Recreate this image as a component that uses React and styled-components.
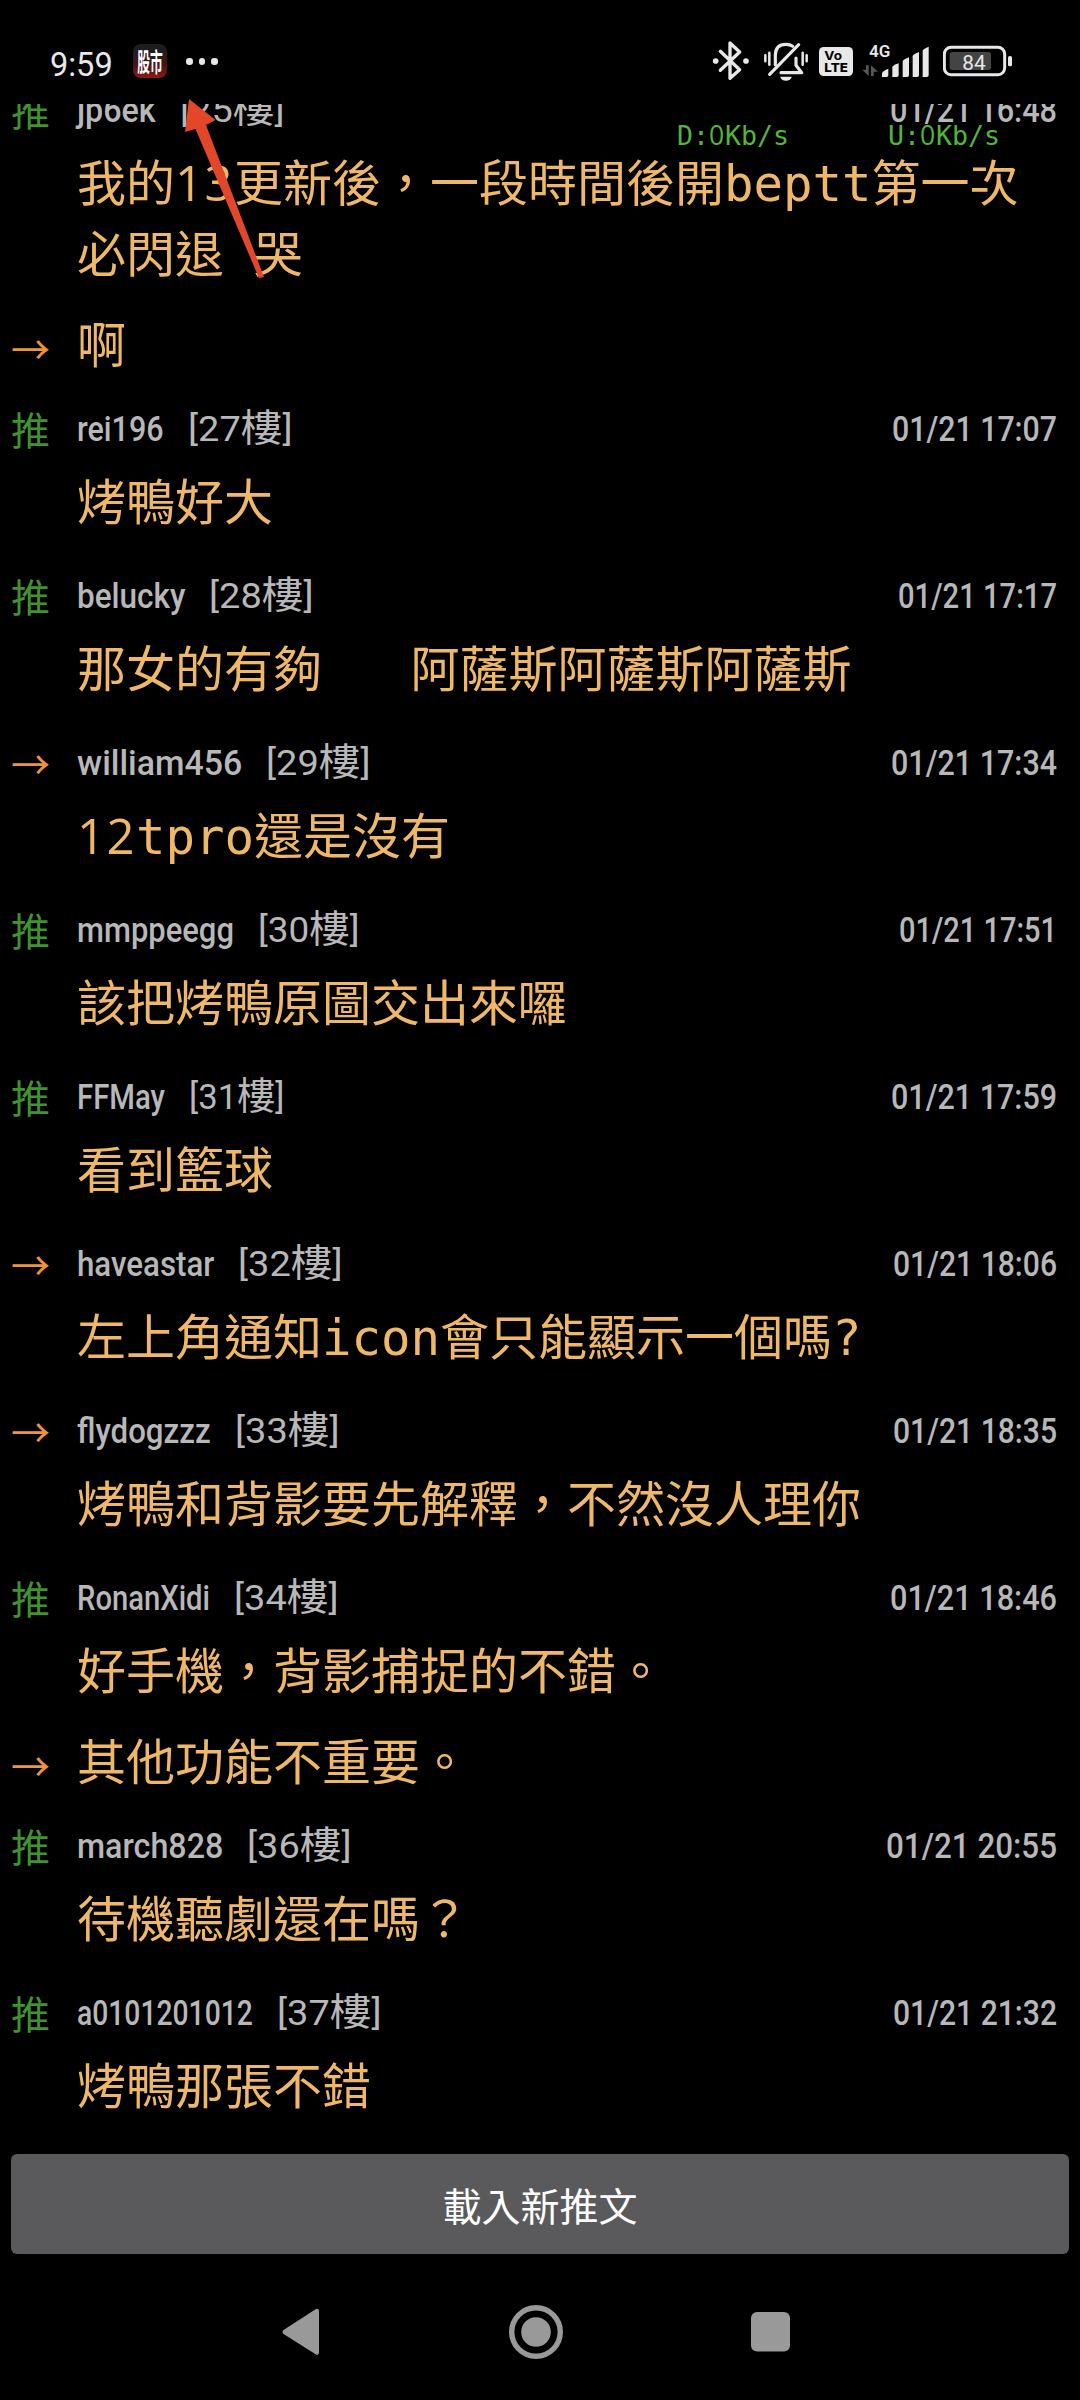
import React, { useLayoutEffect, useRef, useState } from 'react';
import styled, { createGlobalStyle } from 'styled-components';

const GlobalStyle = createGlobalStyle`
  * {
    box-sizing: border-box;
  }

  body {
    margin: 0;
    background: #000;
  }
`;

const cjk = '"Noto Sans CJK TC", sans-serif';

const Screen = styled.div`
  position: relative;
  display: flex;
  flex-direction: column;
  width: 1080px;
  height: 2400px;
  overflow: hidden;
  background: #000;
  font-family: Roboto, ${cjk};
`;

const StatusBar = styled.header`
  display: flex;
  flex: none;
  height: 104px;
  padding: 30px 67px 0 50px;
  color: #e8e8e8;
`;

const Clock = styled.div`
  width: 83px;
  height: 60px;
  font-size: 33px;
  line-height: 69px;
`;

const AppBadge = styled.div`
  display: flex;
  justify-content: center;
  align-items: center;
  width: 34px;
  height: 34px;
  margin-top: 14px;
  border-radius: 8px;
  background: linear-gradient(#1d1d1f 20%, #4a1211 60%, #8c1a16);
`;

const BadgeText = styled.span`
  font: 700 26px/34px ${cjk};
  color: #fff;
  white-space: nowrap;
  transform: scaleX(0.49);
`;

const Dots = styled.div`
  display: flex;
  gap: 6px;
  margin: 28px auto 0 19px;

  i {
    width: 6.5px;
    height: 6.5px;
    border-radius: 50%;
    background: #e8e8e8;
  }
`;

const StatusIcon = styled.svg`
  flex: none;
  height: 60px;
  width: ${({ $width }) => $width}px;
  margin-left: ${({ $gap = 0 }) => $gap}px;
`;

const PostList = styled.main`
  flex: none;
  height: 2050px;
  overflow: hidden;
`;

const PostTrack = styled.div`
  margin-top: -38.5px;
`;

const Post = styled.article`
  display: grid;
  grid-template-columns: 77px 1fr;
`;

const Mark = styled.div`
  height: 81px;
  padding-left: 11px;
  font: 400 39px/86px ${cjk};
  color: ${({ $push }) => ($push ? '#3f9430' : '#ee9440')};
`;

const PostHead = styled.div`
  display: flex;
  height: 83px;
  padding: 7px 23px 0 0;
  font-size: 34.7px;
  font-weight: 500;
  line-height: 74px;
  color: #b8b8b8;
`;

const Floor = styled.div`
  flex: 1;
  margin-left: 24px;
  font-weight: 400;

  span span {
    font: 400 38px/1 ${cjk};
  }
`;

const Message = styled.p`
  margin: 0;
  padding: ${({ $reply }) => ($reply ? '7.5px 0 2.5px' : '0 0 13px')};
  font: 400 49px/71px 'DejaVu Sans Mono', ${cjk};
  color: #efb868;
  white-space: pre-wrap;
`;

// Undotted digits, spaced out to the width of the mono letters around them.
const Digits = styled.span`
  font-family: 'Open Sans';
  line-height: 0;
  letter-spacing: 0.029em;
`;

const LoadButton = styled.button`
  flex: none;
  height: 100px;
  margin: 0 11px;
  padding: 0;
  border: 0;
  border-radius: 6px;
  background: #5a5a5c;
  color: #fff;
  font: 400 39px/100px ${cjk};
`;

const NavBar = styled.nav`
  display: flex;
  align-items: center;
  height: 146px;
  padding: 10px 0 0 282px;
`;

const NavIcon = styled.svg`
  flex: none;
  width: ${({ $width }) => $width}px;
  height: 56px;
  margin-right: ${({ $gap = 0 }) => $gap}px;
  fill: #999;
`;

const Speed = styled.div`
  position: absolute;
  top: 120px;
  left: 677px;
  display: flex;
  gap: 99px;
  font: 400 26.6px/32px 'DejaVu Sans Mono', monospace;
  color: #52b53c;
`;

const Pointer = styled.svg`
  position: absolute;
  top: 90px;
  left: 170px;
  width: 110px;
  height: 200px;
  fill: #e2472a;
`;

const FitBox = styled.div`
  flex: none;
  width: ${({ $width }) => $width}px;
  white-space: nowrap;
`;

const FitText = styled.span`
  display: inline-block;
  transform-origin: 0 50%;
`;

// Condenses a run of text so that it takes exactly the given width.
const Fit = ({ width, children }) => {
  const ref = useRef(null);
  const [scale, setScale] = useState(1);

  useLayoutEffect(() => {
    setScale(width / ref.current.offsetWidth);
  }, [width]);

  return (
    <FitBox $width={width}>
      <FitText ref={ref} style={{ transform: `scaleX(${scale})` }}>
        {children}
      </FitText>
    </FitBox>
  );
};

const MonoText = ({ text }) =>
  text
    .split(/(\d+)/)
    .map((part, i) => (i % 2 ? <Digits key={i}>{part}</Digits> : part));

const posts = [
  { push: true, name: 'jp6ek', width: 79, floor: 25, time: '01/21 16:48', timeWidth: 167, text: '我的13更新後，一段時間後開beptt第一次\n必閃退 哭' },
  { text: '啊' },
  { push: true, name: 'rei196', width: 87, floor: 27, time: '01/21 17:07', timeWidth: 165, text: '烤鴨好大' },
  { push: true, name: 'belucky', width: 108, floor: 28, time: '01/21 17:17', timeWidth: 159, text: '那女的有夠   阿薩斯阿薩斯阿薩斯' },
  { name: 'william456', width: 165, floor: 29, time: '01/21 17:34', timeWidth: 166, text: '12tpro還是沒有' },
  { push: true, name: 'mmppeegg', width: 157, floor: 30, floorWidth: 101, time: '01/21 17:51', timeWidth: 158, text: '該把烤鴨原圖交出來囉' },
  { push: true, name: 'FFMay', width: 88, floor: 31, floorWidth: 95, time: '01/21 17:59', timeWidth: 166, text: '看到籃球' },
  { name: 'haveastar', width: 137, floor: 32, time: '01/21 18:06', timeWidth: 164, text: '左上角通知icon會只能顯示一個嗎?' },
  { name: 'flydogzzz', width: 134, floor: 33, time: '01/21 18:35', timeWidth: 164, text: '烤鴨和背影要先解釋，不然沒人理你' },
  { push: true, name: 'RonanXidi', width: 133, floor: 34, time: '01/21 18:46', timeWidth: 167, text: '好手機，背影捕捉的不錯。' },
  { text: '其他功能不重要。' },
  { push: true, name: 'march828', width: 146, floor: 36, time: '01/21 20:55', timeWidth: 171, text: '待機聽劇還在嗎？' },
  { push: true, name: 'a0101201012', width: 176, floor: 37, time: '01/21 21:32', timeWidth: 164, text: '烤鴨那張不錯' },
];

const StatusIcons = () => (
  <>
    <StatusIcon $width={38} viewBox="36 0 114 180">
      <path d="M61 64 L119 119 L90 145 V39 L119 66 L61 121" fill="none" stroke="#e8e8e8" strokeWidth="10" strokeLinejoin="round" strokeLinecap="round" />
      <circle cx="47" cy="93" r="8.5" fill="#e8e8e8" />
      <circle cx="138" cy="93" r="8.5" fill="#e8e8e8" />
    </StatusIcon>
    <StatusIcon $width={46} $gap={13} viewBox="189 0 138 180">
      <g fill="none" stroke="#e8e8e8" strokeWidth="9.5" strokeLinejoin="round" strokeLinecap="round">
        <path d="M226 104 V76 C226 52 240 43 258 43 C266 43 273 45 278 49" />
        <path d="M296 44 L209 133" />
        <path d="M288 84 V106 L305 128 H243" />
      </g>
      <path d="M241 140 H275 A17 12 0 0 1 241 140Z" fill="#e8e8e8" />
      <path d="M196 76 V94 M208 68 V104 M308 68 V104 M320 76 V94" stroke="#e8e8e8" strokeWidth="7.5" strokeLinecap="round" />
    </StatusIcon>
    <StatusIcon $width={34} $gap={10} viewBox="357 0 102 180">
      <rect x="357" y="51" width="102" height="87" rx="14" fill="#e8e8e8" />
      <text x="373" y="90" fontSize="36" fontWeight="700" textLength="53" lengthAdjust="spacingAndGlyphs" fontFamily="Inter">Vo</text>
      <text x="373" y="127" fontSize="36" fontWeight="800" textLength="71" lengthAdjust="spacingAndGlyphs" fontFamily="Inter">LTE</text>
    </StatusIcon>
    <StatusIcon $width={68} $gap={9} viewBox="486 0 204 180">
      <text x="507" y="80" fontSize="52" fontWeight="600" textLength="64" lengthAdjust="spacingAndGlyphs" fill="#e8e8e8" fontFamily="Roboto">4G</text>
      <path d="M506 106 V138 L487 119 H498 V106Z M513 138 V106 L534 125 H521 V138Z" fill="#575757" />
      <g fill="#e8e8e8">
        <path d="M546 141 V130 Q546 124 565 116 V135 Q565 141 559 141Z" />
        <path d="M577 141 V112 Q577 107 596 100 V135 Q596 141 590 141Z" />
        <path d="M608 141 V95 Q608 89 627 82 V135 Q627 141 621 141Z" />
        <path d="M638 141 V79 Q638 73 657 66 V135 Q657 141 651 141Z" />
        <path d="M668 141 V63 Q668 57 686 50 V135 Q686 141 680 141Z" />
      </g>
    </StatusIcon>
    <StatusIcon $width={70} $gap={13} viewBox="729 0 210 180">
      <rect x="733" y="52" width="181" height="82" rx="20" fill="none" stroke="#e8e8e8" strokeWidth="9" />
      <rect x="749" y="66" width="124" height="54" rx="8" fill="#444" />
      <rect x="924" y="78" width="12" height="31" rx="5" fill="#e8e8e8" />
      <text x="787" y="119" fontSize="58" fontWeight="400" textLength="70" lengthAdjust="spacingAndGlyphs" fill="#e8e8e8" fontFamily="Roboto">84</text>
    </StatusIcon>
  </>
);

const App = () => {
  return (
    <>
      <GlobalStyle />
      <Screen>
        <StatusBar>
          <Clock>
            <Fit width={63}>9:59</Fit>
          </Clock>
          <AppBadge>
            <BadgeText>股市</BadgeText>
          </AppBadge>
          <Dots>
            <i />
            <i />
            <i />
          </Dots>
          <StatusIcons />
        </StatusBar>
        <PostList>
          <PostTrack>
            {posts.map((post) => (
              <Post key={post.text}>
                <Mark $push={post.push}>{post.push ? '推' : '→'}</Mark>
                <div>
                  {post.name && (
                    <PostHead>
                      <Fit width={post.width}>{post.name}</Fit>
                      <Floor>
                        <Fit width={post.floorWidth || 104}>
                          [{post.floor}
                          <span>樓</span>]
                        </Fit>
                      </Floor>
                      <Fit width={post.timeWidth}>{post.time}</Fit>
                    </PostHead>
                  )}
                  <Message $reply={!post.name}>
                    <MonoText text={post.text} />
                  </Message>
                </div>
              </Post>
            ))}
          </PostTrack>
        </PostList>
        <LoadButton>載入新推文</LoadButton>
        <NavBar>
          <NavIcon $width={37} $gap={190} viewBox="0 0 37 56">
            <path d="M34 5 Q37 4 37 8 V48 Q37 52 34 50.5 L1.5 30 Q-0.5 28 1.5 26Z" />
          </NavIcon>
          <NavIcon $width={54} $gap={188} viewBox="0 0 54 56">
            <circle cx="27" cy="28" r="24.3" fill="none" stroke="#999" strokeWidth="5.4" />
            <circle cx="27" cy="28" r="14.8" />
          </NavIcon>
          <NavIcon $width={39} viewBox="0 0 39 56">
            <rect y="8" width="39" height="39.6" rx="6" />
          </NavIcon>
        </NavBar>
        <Speed>
          <span>
            <MonoText text="D:0Kb/s" />
          </span>
          <span>
            <MonoText text="U:0Kb/s" />
          </span>
        </Speed>
        <Pointer viewBox="170 90 110 200">
          <path d="M189 99 L215.6 120 L206 125 L264 277 L259 278 L195.5 129 L185 132Z" />
        </Pointer>
      </Screen>
    </>
  );
};

export default App;
